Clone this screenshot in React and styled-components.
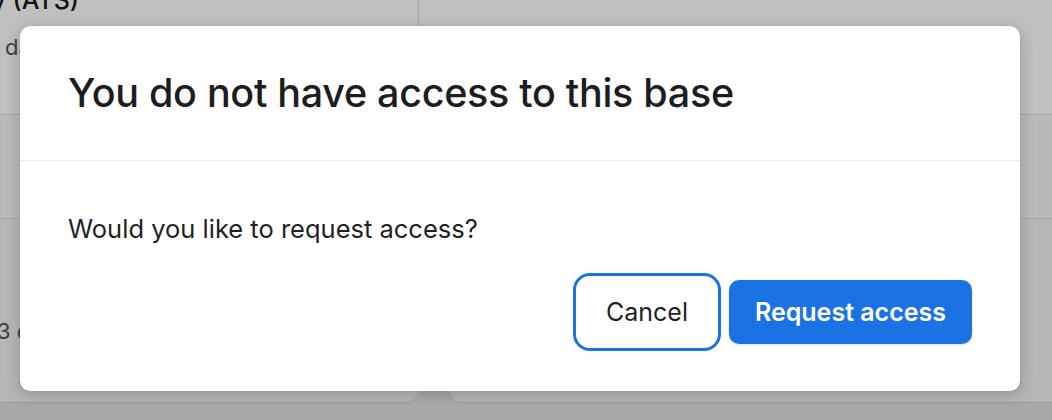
import React from 'react';
import styled, { createGlobalStyle } from 'styled-components';

const GlobalStyle = createGlobalStyle`
  html, body {
    margin: 0;
    padding: 0;
    font-family: Inter, "Noto Sans", "Liberation Sans", sans-serif;
    -webkit-font-smoothing: antialiased;
  }
`;

const Page = styled.div`
  position: relative;
  width: 1052px;
  height: 420px;
  overflow: hidden;
  background: #e2e2e2;
  display: flex;
  flex-direction: column;
`;

const TopRow = styled.div`
  display: grid;
  grid-template-columns: 419px 1fr;
  height: 114px;
  background: #fff;
  border-bottom: 1px solid #dcdcdc;
`;

const Cell = styled.div`
  display: flex;
  flex-direction: column;
  overflow: hidden;
  border-right: ${({ divider }) => (divider ? '1px solid #dcdcdc' : 'none')};
`;

const BaseTitle = styled.div`
  display: flex;
  justify-content: flex-end;
  align-items: flex-end;
  width: 79px;
  height: 13px;
  font-size: 25px;
  font-weight: 500;
  color: #1a1a1a;
  white-space: nowrap;
  line-height: 1;
`;

const Meta = styled.div`
  margin-left: ${({ indent }) => indent}px;
  margin-top: ${({ top }) => top}px;
  font-size: 22px;
  color: #555;
  white-space: nowrap;
`;

const MiddleRow = styled.div`
  height: 103px;
  background: #f8f8f8;
  border-bottom: 1px solid #dedede;
`;

const CardRow = styled.div`
  display: grid;
  grid-template-columns: 418px 1fr;
  column-gap: 32px;
  height: 184px;
  background: #e2e2e2;
`;

const Card = styled.div`
  background: #f3f3f3;
  border-bottom: 1px solid #cfcfcf;
  border-radius: ${({ side }) => (side === 'left' ? '0 0 12px 0' : '0 0 0 12px')};
  display: flex;
  flex-direction: column;
  justify-content: center;
  overflow: hidden;
`;

const Overlay = styled.div`
  position: absolute;
  inset: 0;
  background: rgba(0, 0, 0, 0.25);
  display: flex;
  align-items: flex-start;
  padding: 26px 0 0 20px;
`;

const Modal = styled.div`
  width: 1000px;
  background: #fff;
  border-radius: 10px;
  box-shadow: 0 4px 16px rgba(0, 0, 0, 0.18), 0 0 2px rgba(0, 0, 0, 0.12);
  display: flex;
  flex-direction: column;
`;

const ModalHeader = styled.div`
  height: 134px;
  padding: 0 48px;
  display: flex;
  align-items: center;
  border-bottom: 1px solid #ececec;
`;

const Title = styled.h2`
  margin: 0;
  font-size: 39.5px;
  font-weight: 500;
  letter-spacing: -0.3px;
  color: #1d1d21;
`;

const ModalBody = styled.div`
  padding: 52px 48px 47px;
  display: flex;
  flex-direction: column;
`;

const Message = styled.p`
  margin: 0;
  font-size: 25.5px;
  line-height: 32px;
  color: #1f1f1f;
`;

const Footer = styled.div`
  margin-top: 35px;
  display: flex;
  justify-content: flex-end;
  gap: 15px;
`;

const Button = styled.button`
  height: 64px;
  padding: 0 26px;
  border: none;
  border-radius: 10px;
  font-family: inherit;
  font-size: 25px;
  font-weight: ${({ primary }) => (primary ? 600 : 400)};
  color: ${({ primary }) => (primary ? '#fff' : '#1f1f1f')};
  background: ${({ primary }) => (primary ? '#1b72e5' : '#fff')};
  box-shadow: ${({ primary }) => (primary ? '0 1px 3px rgba(0,0,0,0.12)' : 'none')};
  outline: ${({ focused }) => (focused ? '3px solid #1b72e5' : 'none')};
  outline-offset: 4px;
  cursor: pointer;
`;

export default function App() {
  return (
    <>
      <GlobalStyle />
      <Page>
        <TopRow>
          <Cell divider>
            <BaseTitle>
              <span>Recruiting Directory (ATS)</span>
            </BaseTitle>
            <Meta indent={5} top={21}>
              days ago
            </Meta>
          </Cell>
          <Cell />
        </TopRow>
        <MiddleRow />
        <CardRow>
          <Card side="left">
            <Meta indent={-3} top={40}>
              3 days ago
            </Meta>
          </Card>
          <Card side="right" />
        </CardRow>
        <Overlay>
          <Modal role="dialog" aria-modal="true">
            <ModalHeader>
              <Title>You do not have access to this base</Title>
            </ModalHeader>
            <ModalBody>
              <Message>Would you like to request access?</Message>
              <Footer>
                <Button focused>Cancel</Button>
                <Button primary>Request access</Button>
              </Footer>
            </ModalBody>
          </Modal>
        </Overlay>
      </Page>
    </>
  );
}
